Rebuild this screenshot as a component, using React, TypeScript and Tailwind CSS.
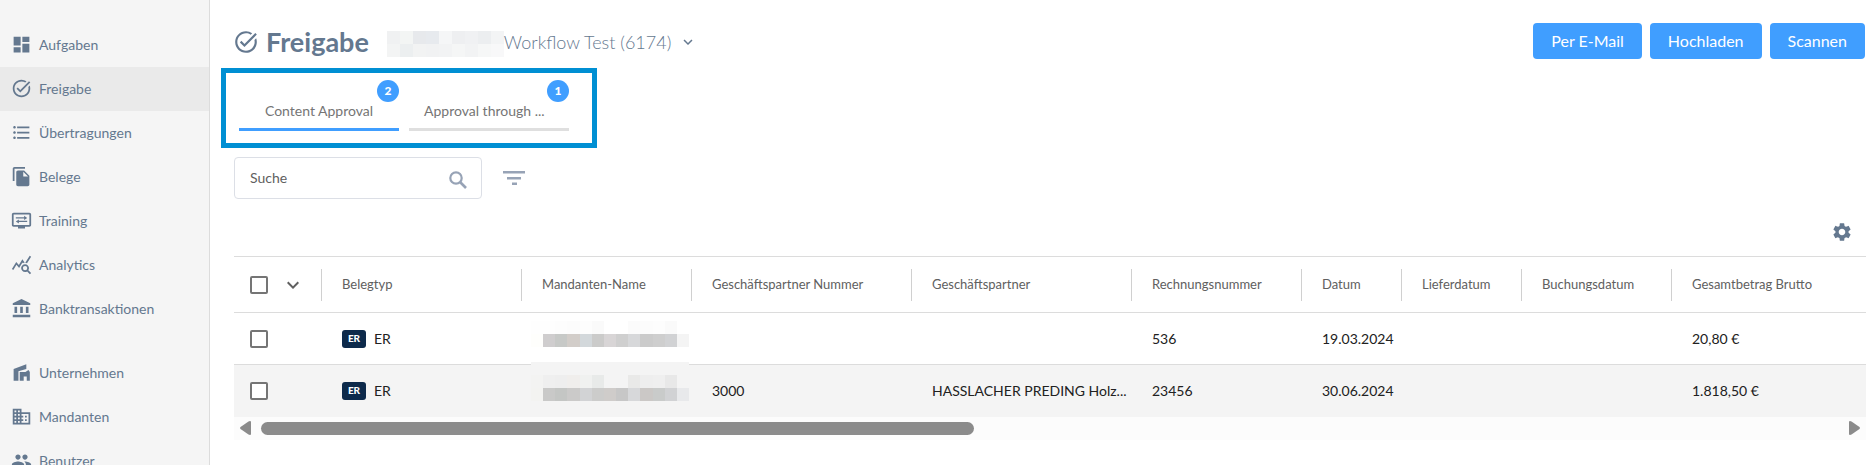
import React from 'react';
import {
  MdAccountBalance, MdDashboard, MdDomain, MdExpandMore, MdFileCopy,
  MdFormatListBulleted, MdGroup, MdQueryStats, MdSettings, MdTaskAlt,
} from 'react-icons/md';

function TrainingIcon({ size = 21 }: { size?: number }) {
  return (
    <svg width={size} height={size} viewBox="0 0 24 24" fill="currentColor">
      <path d="M21 3H3c-1.100 0-2 .9-2 2v12c0 1.100.9 2 2 2h5v2h8v-2h5c1.100 0 2-.9 2-2V5c0-1.100-.9-2-2-2zm0 14H3V5h18v12z" />
      <path d="M5.500 8.200H15V6.500l3.500 2.500L15 11.500V9.800H5.500zM18.500 12.200H9V10.800L5.500 13.200 9 15.500v-1.700h9.500z" />
    </svg>
  );
}

function CompanyIcon({ size = 21 }: { size?: number }) {
  return (
    <svg width={size} height={size} viewBox="0 0 24 24" fill="currentColor">
      <path d="M3 21.500V8L17.500 2.500V8L8.500 10.500v11z" />
      <path d="M10 21.500V11.500h6.500L20 9l1.500 2.500v10H18v-5h-3.500v5z" />
    </svg>
  );
}

function SearchIcon() {
  return (
    <svg width="18" height="18" viewBox="0 0 18 18" fill="none" stroke="currentColor">
      <circle cx="7" cy="7" r="5.700" strokeWidth="2.200" />
      <path d="M11 11l6 6" strokeWidth="2.600" />
    </svg>
  );
}

function FilterIcon() {
  return (
    <svg width="22" height="14" viewBox="0 0 22 14" fill="currentColor">
      <path d="M0 0h22v2.400H0zM4 6h14v2.400H4zM9 11.600h5V14H9z" />
    </svg>
  );
}

const mainNav = [
  { label: 'Aufgaben', icon: MdDashboard },
  { label: 'Freigabe', icon: MdTaskAlt, active: true },
  { label: 'Übertragungen', icon: MdFormatListBulleted },
  { label: 'Belege', icon: MdFileCopy },
  { label: 'Training', icon: TrainingIcon },
  { label: 'Analytics', icon: MdQueryStats },
  { label: 'Banktransaktionen', icon: MdAccountBalance },
];

const adminNav = [
  { label: 'Unternehmen', icon: CompanyIcon },
  { label: 'Mandanten', icon: MdDomain },
  { label: 'Benutzer', icon: MdGroup },
];

const tabs = [
  { label: 'Content Approval', count: 2, align: 'text-center' },
  { label: 'Approval through ...', count: 1, align: 'text-left' },
];

const columns = [
  { label: 'Belegtyp', width: 'w-[200px]' },
  { label: 'Mandanten-Name', width: 'w-[170px]' },
  { label: 'Geschäftspartner Nummer', width: 'w-[220px]' },
  { label: 'Geschäftspartner', width: 'w-[220px]' },
  { label: 'Rechnungsnummer', width: 'w-[170px]' },
  { label: 'Datum', width: 'w-[100px]' },
  { label: 'Lieferdatum', width: 'w-[120px]' },
  { label: 'Buchungsdatum', width: 'w-[150px]' },
  { label: 'Gesamtbetrag Brutto', width: 'w-auto' },
];

// Anonymisierte Namen als Pixelraster
const titleMask = [
  ['#f0f1f2', '#f3f5f4', '#e7e9ec', '#e7eaee', '#f5f6f7', '#eeeff1', '#f0f1f3', '#eceef0', '#f3f4f5'],
  ['#f3f4f4', '#eceff0', '#f2f3f3', '#f1f2f3', '#f2f3f4', '#f5f6f6', '#f2f3f4', '#f6f7f7', '#f8f8f9'],
];

const rows = [
  {
    type: 'ER', partnerNo: '', partner: '', invoice: '536', date: '19.03.2024', total: '20,80 €',
    maskClass: 'mt-2 w-[158px]',
    mask: [
      ['#fefefe', '#fefefe', '#fdfdfd', '#fcfcfc', '#fdfdfd', '#fafafa', '#ffffff', '#ffffff', '#fbfbfb', '#fcfcfc', '#fdfdfd', '#fafafa', '#ffffff'],
      ['#fefefc', '#cfcdce', '#c7c9c7', '#d2cdc9', '#d3d8db', '#cbcbca', '#d8d5d6', '#cfcfcf', '#d7d8da', '#cbcbcb', '#cecece', '#d1d2d4', '#f4f4f4'],
    ],
  },
  {
    type: 'ER', partnerNo: '3000', partner: 'HASSLACHER PREDING Holz...', invoice: '23456', date: '30.06.2024', total: '1.818,50 €',
    maskClass: '-mt-[3px] w-[158px]',
    mask: [
      ['#f4f4f4'],
      ['#f3f3f2', '#efefef', '#eeeeee', '#f0eeec', '#f0f1f0', '#e8eae9', '#f4f4f4', '#f4f4f4', '#e9e9e8', '#eeeeee', '#efefef', '#e8e8e8', '#f4f4f4'],
      ['#f3f3f1', '#c9c9c8', '#c4c6c4', '#cbcac9', '#d2d3d5', '#cccccb', '#cfccca', '#c7c7c7', '#d7d8da', '#cbc8c6', '#c9cbca', '#d1d2d4', '#e8e9eb'],
    ],
  },
];

function Mosaic({ cells, className }: { cells: string[][]; className: string }) {
  return (
    <div className={className}>
      {cells.map((line, y) => (
        <div key={y} className="flex">
          {line.map((color, x) => (
            <span key={x} className="h-[13px] flex-1" style={{ backgroundColor: color }} />
          ))}
        </div>
      ))}
    </div>
  );
}

function NavList({ items }: { items: { label: string; icon: React.ElementType; active?: boolean }[] }) {
  return (
    <ul>
      {items.map(({ label, icon: Icon, active }) => (
        <li key={label}>
          <a href="#" className={`flex h-11 items-center gap-[7px] pb-0.5 pl-[11px] text-[14px] ${active ? 'bg-[#eaeaea]' : 'hover:bg-[#eaeaea]'}`}>
            <Icon size={21} />
            {label}
          </a>
        </li>
      ))}
    </ul>
  );
}

const checkboxClass = 'block h-[18px] w-[18px] appearance-none rounded-xs border-2 border-[#757575] bg-white checked:bg-[#409eff]';

export default function App() {
  const [activeTab, setActiveTab] = React.useState(0);
  const [selected, setSelected] = React.useState<number[]>([]);
  const [search, setSearch] = React.useState('');

  const toggleRow = (i: number) => {
    setSelected(selected.includes(i) ? selected.filter(s => s !== i) : [...selected, i]);
  };

  const toggleAll = () => {
    setSelected(selected.length === rows.length ? [] : rows.map((_, i) => i));
  };

  return (
    <div className="flex h-screen overflow-hidden bg-white font-['Lato',sans-serif] text-[#64788f]">
      <nav className="flex w-[210px] shrink-0 flex-col gap-5 border-r border-[#dcdcdc] bg-[#f5f5f5] pt-[23px]">
        <NavList items={mainNav} />
        <NavList items={adminNav} />
      </nav>

      <main className="min-w-0 flex-1">
        <header className="flex h-[68px] items-start justify-between pt-[23px] pl-[23px]">
          <div className="flex h-[38px] items-center">
            <MdTaskAlt size={26} />
            <h1 className="ml-[7px] text-[27px] leading-9 font-bold">Freigabe</h1>
            <button className="ml-[18px] flex items-center text-[18px] font-light">
              <Mosaic cells={titleMask} className="mt-1 w-[117px]" />
              Workflow Test (6174)
              <MdExpandMore size={18} className="ml-2" />
            </button>
          </div>
          <div className="flex gap-2 pr-px">
            {['Per E-Mail', 'Hochladen', 'Scannen'].map(label => (
              <button key={label} className="h-9 rounded bg-[#409eff] px-[18px] text-[16px] text-white hover:bg-[#66b1ff]">
                {label}
              </button>
            ))}
          </div>
        </header>

        <div role="tablist" className="ml-[11px] flex h-20 w-[376px] gap-[10px] border-[5px] border-[#008fd3] px-[13px] pt-[7px]">
          {tabs.map((tab, i) => (
            <button
              key={tab.label}
              role="tab"
              aria-selected={activeTab === i}
              onClick={() => setActiveTab(i)}
              className={`flex h-[51px] w-40 flex-col items-center border-b-[3px] text-[14px] leading-[18px] text-[#757575] ${activeTab === i ? 'border-[#409eff]' : 'border-[#dfdfdf]'}`}
            >
              <span className="flex h-[22px] w-[22px] items-center justify-center self-end rounded-full bg-[#409eff] text-[12px] font-black text-white">
                {tab.count}
              </span>
              <span className={`w-[130px] whitespace-nowrap ${tab.align}`}>{tab.label}</span>
            </button>
          ))}
        </div>

        <div className="flex items-center gap-[21px] pt-[9px] pl-6">
          <label className="flex h-[42px] w-[248px] items-center justify-between rounded border border-[#dcdfe6] pr-[14px] pl-[15px]">
            <input
              value={search}
              onChange={e => setSearch(e.target.value)}
              placeholder="Suche"
              aria-label="Suche"
              className="w-40 pb-0.5 text-[14px] text-[#606060] outline-none placeholder:text-[#606060]"
            />
            <span className="pt-1 text-[#97a3b6]"><SearchIcon /></span>
          </label>
          <button aria-label="Filter" className="text-[#97a3b6]">
            <FilterIcon />
          </button>
        </div>

        <div className="flex h-[57px] items-end justify-end pr-[13px] pb-[13px]">
          <button aria-label="Einstellungen">
            <MdSettings size={22} />
          </button>
        </div>

        <div className="ml-6">
          <table className="w-full table-fixed border-collapse text-left text-[14px] text-[#212121]">
            <thead>
              <tr className="h-14 border-y border-[#dcdcdc] text-[13px] text-[#606060]">
                <th className="w-[88px] p-0">
                  <div className="flex h-8 items-center gap-[13px] border-r border-[#d0d0d0] pl-4">
                    <input
                      type="checkbox"
                      aria-label="Alle auswählen"
                      checked={selected.length === rows.length}
                      onChange={toggleAll}
                      className={checkboxClass}
                    />
                    <button aria-label="Auswahl">
                      <MdExpandMore size={24} />
                    </button>
                  </div>
                </th>
                {columns.map((col, i) => (
                  <th key={col.label} className={`p-0 font-normal ${col.width}`}>
                    <div className={`flex h-8 items-center pl-5 whitespace-nowrap ${i < columns.length - 1 ? 'border-r border-[#d0d0d0]' : ''}`}>
                      {col.label}
                    </div>
                  </th>
                ))}
              </tr>
            </thead>
            <tbody>
              {rows.map((row, i) => (
                <tr key={row.invoice} className="h-[52px] border-b border-[#dcdcdc] last:border-b-0 even:bg-[#f4f4f4]">
                  <td className="pl-4">
                    <input
                      type="checkbox"
                      aria-label={`Beleg ${row.invoice}`}
                      checked={selected.includes(i)}
                      onChange={() => toggleRow(i)}
                      className={checkboxClass}
                    />
                  </td>
                  <td className="pl-5">
                    <div className="flex items-center gap-2">
                      <span className="flex h-[18px] w-6 items-center justify-center rounded-[3px] bg-[#0d2a4b] text-[10px] font-black text-white">
                        {row.type}
                      </span>
                      {row.type}
                    </div>
                  </td>
                  <td className="pl-[9px] align-top"><Mosaic cells={row.mask} className={row.maskClass} /></td>
                  <td className="pl-5">{row.partnerNo}</td>
                  <td className="pl-5 whitespace-nowrap">{row.partner}</td>
                  <td className="pl-5">{row.invoice}</td>
                  <td className="pl-5 whitespace-nowrap">{row.date}</td>
                  <td />
                  <td />
                  <td className="pl-5">{row.total}</td>
                </tr>
              ))}
            </tbody>
          </table>

          {/* Horizontaler Scrollbalken */}
          <div className="flex h-[23px] items-center gap-[10px] bg-[#fcfcfc] px-[6px] text-[#8b8b8b]">
            <svg width="11" height="14" viewBox="0 0 11 14" fill="currentColor">
              <path d="M10 0q1 0 1 1v12q0 1-1 1L8.500 13.500.5 8q-.8-1 0-2L8.500.5z" />
            </svg>
            <div className="flex-1">
              <div className="h-[13px] w-[713px] max-w-full rounded-full bg-[#8b8b8b]" />
            </div>
            <svg width="11" height="14" viewBox="0 0 11 14" fill="currentColor">
              <path d="M1 0Q0 0 0 1v12q0 1 1 1l1.500-.5 8-5.500q.8-1 0-2l-8-5.500z" />
            </svg>
          </div>
        </div>
      </main>
    </div>
  );
}
